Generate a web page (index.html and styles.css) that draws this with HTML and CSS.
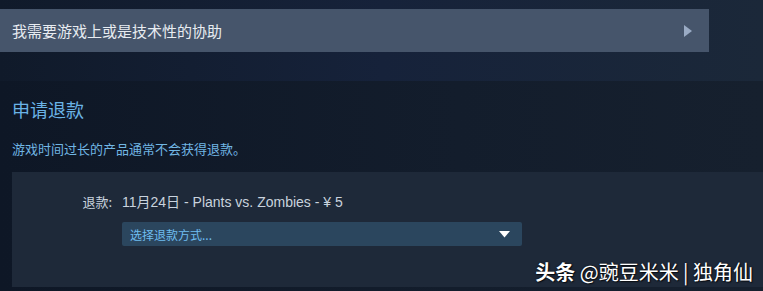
FILE: index.html
```html
<!DOCTYPE html>
<html lang="zh-CN">
<head>
<meta charset="utf-8">
<link rel="stylesheet" href="styles.css">
</head>
<body>
<div class="top">
  <div class="help-btn">
    <span class="help-text">我需要游戏上或是技术性的协助</span>
    <svg class="help-arrow" width="10" height="12" viewBox="0 0 10 12"><path d="M1 0 L9 6 L1 12 Z" fill="#9aabc4"/></svg>
  </div>
</div>
<div class="refund">
  <h2 class="refund-title">申请退款</h2>
  <p class="refund-note">游戏时间过长的产品通常不会获得退款。</p>
  <div class="panel">
    <div class="row">
      <span class="label">退款:</span>
      <span class="value">11月24日 - Plants vs. Zombies - ¥ 5</span>
    </div>
    <div class="row">
      <span class="label"></span>
      <div class="select">
        <span class="select-text">选择退款方式...</span>
        <svg class="select-arrow" width="11" height="7" viewBox="0 0 11 7"><path d="M0 0 L11 0 L5.5 6.5 Z" fill="#ffffff"/></svg>
      </div>
    </div>
  </div>
</div>
<div class="watermark"><b>头条</b> @豌豆米米 | 独角仙</div>
</body>
</html>
```
FILE: styles.css
```css
html, body {
  margin: 0;
  padding: 0;
}
body {
  width: 763px;
  height: 291px;
  overflow: hidden;
  position: relative;
  font-family: "Liberation Sans", "Noto Sans CJK SC", sans-serif;
  background: #121c2b;
}
.top {
  height: 81px;
  box-sizing: border-box;
  padding-top: 9px;
  background: linear-gradient(90deg, #101a2a 0%, #16223a 50%, #1b2839 100%);
}
.help-btn {
  width: 709px;
  height: 43px;
  background: #46556b;
  display: flex;
  align-items: center;
  justify-content: space-between;
  box-sizing: border-box;
  padding: 0 16px 0 12px;
}
.help-text {
  color: #e8ecf1;
  font-size: 15px;
  font-family: "Noto Sans CJK SC", sans-serif;
}
.help-arrow {
  display: block;
}
.refund {
  height: 210px;
  box-sizing: border-box;
  padding: 15px 0 0 12px;
  background: linear-gradient(90deg, #0e1726 0%, #131d2c 60%, #16202e 100%);
}
.refund-title {
  margin: 0;
  font-weight: normal;
  font-size: 18px;
  line-height: 26px;
  color: #6ab3e6;
  font-family: "Noto Sans CJK SC", sans-serif;
}
.refund-note {
  margin: 18px 0 0 0;
  font-size: 13px;
  line-height: 18px;
  color: #71b6e4;
  font-family: "Noto Sans CJK SC", sans-serif;
}
.panel {
  margin-top: 14px;
  height: 115px;
  box-sizing: border-box;
  background: #1e2939;
  padding-top: 20px;
  display: flex;
  flex-direction: column;
  gap: 10px;
}
.row {
  display: flex;
  align-items: center;
}
.label {
  width: 100px;
  text-align: right;
  padding-right: 10px;
  font-size: 13px;
  color: #c9d3de;
  font-family: "Noto Sans CJK SC", sans-serif;
  line-height: 20px;
}
.value {
  font-size: 14px;
  color: #c9d3de;
  line-height: 20px;
}
.select {
  width: 400px;
  height: 24px;
  box-sizing: border-box;
  background: #2b465e;
  border-radius: 2px;
  display: flex;
  align-items: center;
  justify-content: space-between;
  padding: 0 12px 0 8px;
}
.select-text {
  font-size: 12px;
  color: #6fbdf0;
  font-family: "Noto Sans CJK SC", sans-serif;
}
.select-arrow {
  display: block;
}
.watermark {
  position: absolute;
  right: 10px;
  bottom: 6px;
  color: #ffffff;
  font-size: 20px;
  line-height: 26px;
  font-family: "Noto Sans CJK SC", sans-serif;
  text-shadow: 0 0 2px rgba(0,0,0,0.8), 1px 1px 1px rgba(0,0,0,0.6);
}
.watermark b {
  font-weight: 700;
}
```
